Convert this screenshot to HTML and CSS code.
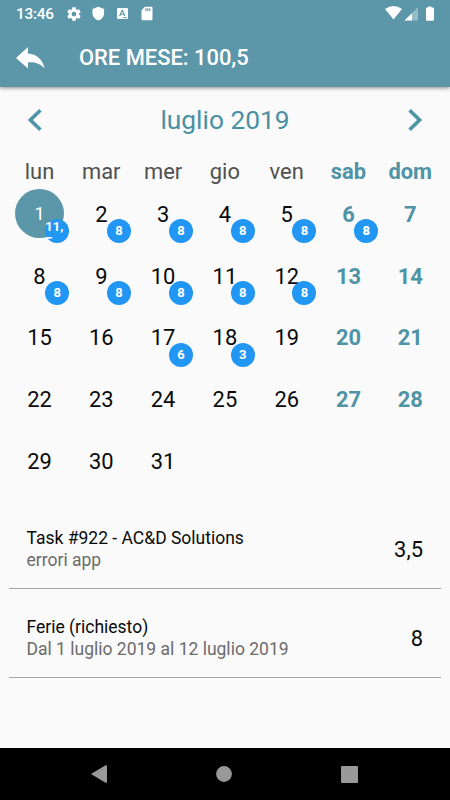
FILE: index.html
```html
<!DOCTYPE html>
<html lang="it">
<head>
<meta charset="utf-8">
<title>Ore mese</title>
<link rel="stylesheet" href="styles.css">
</head>
<body>
<header class="top">
  <div class="status">
    <span class="clock">13:46</span>
    <svg class="status-left" width="86" height="16" viewBox="0 0 86 16" fill="#fff">
      <g transform="translate(-.2 -.1) scale(.68)"><path d="M19.43 12.98c.04-.32.07-.64.07-.98s-.03-.66-.07-.98l2.11-1.65c.19-.15.24-.42.12-.64l-2-3.46c-.12-.22-.39-.3-.61-.22l-2.49 1c-.52-.4-1.08-.73-1.69-.98l-.38-2.65C14.46 2.18 14.25 2 14 2h-4c-.25 0-.46.18-.49.42l-.38 2.65c-.61.25-1.17.59-1.69.98l-2.49-1c-.23-.09-.49 0-.61.22l-2 3.46c-.13.22-.07.49.12.64l2.11 1.65c-.04.32-.07.65-.07.98s.03.66.07.98l-2.11 1.65c-.19.15-.24.42-.12.64l2 3.46c.12.22.39.3.61.22l2.49-1c.52.4 1.08.73 1.69.98l.38 2.65c.03.24.24.42.49.42h4c.25 0 .46-.18.49-.42l.38-2.65c.61-.25 1.17-.59 1.69-.98l2.49 1c.23.09.49 0 .61-.22l2-3.46c.12-.22.07-.49-.12-.64l-2.11-1.65zM12 15.5A3.5 3.5 0 1 1 12 8.500a3.500 3.500 0 0 1 0 7z"/></g>
      <path d="M32.300 .7L38.100 3.100V7.200C38.100 10.700 35.500 13.500 32.300 14.500C29.100 13.500 26.500 10.700 26.500 7.200V3.100Z"/>
      <path fill-rule="evenodd" d="M52 2h9q1 0 1 1v9q0 1-1 1h-9q-1 0-1-1v-9q0-1 1-1zM55.700 3.700L53.100 10.100h1.300l.5-1.400h2.700l.5 1.400h1.300L56.800 3.700zm.6 1.600l.9 2.400h-1.900zM57 11.200h4v.7h-4z"/>
      <path fill-rule="evenodd" d="M79 .8h6.500q1 0 1 1V13.300q0 1-1 1h-9q-1 0-1-1V4.300zM79.200 2.300v2.700h1.200V2.300zm2 0v2.700h1.200V2.300zm2 0v2.700h1.200V2.300z"/>
    </svg>
    <svg class="status-right" width="50" height="16" viewBox="0 0 50 16" fill="#fff">
      <path d="M0 3Q8.500-3 17 3L8.500 13.500Z"/>
      <path d="M33 1.200V14.400H19.500Z" opacity=".35"/>
      <path d="M27 7.200V14.400H19.500Z"/>
      <path d="M43 .4h3.500v1H48q1 0 1 1v11q0 1.300-1 1.300h-6q-1 0-1-1.300v-11q0-1 1-1h1Z"/>
    </svg>
  </div>
  <div class="appbar">
    <svg class="back" width="30" height="24" viewBox="0 0 30 24" fill="#fff"><path d="M0 11L12 0V6.500C20.500 7.100 26.500 12 28.700 21.500C24 16.200 19 14.800 12 15.200V21.500Z"/></svg>
    <h1>ORE MESE: 100,5</h1>
  </div>
</header>
<main>
  <div class="month">
    <svg width="14" height="22" viewBox="0 0 14 22"><path d="M12.400 1.300L2.400 11L12.400 20.700"/></svg>
    <h2>luglio 2019</h2>
    <svg width="14" height="22" viewBox="0 0 14 22"><path d="M1.600 1.300L11.600 11L1.600 20.700"/></svg>
  </div>
  <div class="names">
    <span>lun</span><span>mar</span><span>mer</span><span>gio</span><span>ven</span><span class="we">sab</span><span class="we">dom</span>
  </div>
  <div class="days">
    <div class="day"><span class="selected">1</span><b class="badge"><span class="wrap">11,<br>5</span></b></div><div class="day">2<b class="badge">8</b></div><div class="day">3<b class="badge">8</b></div><div class="day">4<b class="badge">8</b></div><div class="day">5<b class="badge">8</b></div><div class="day we">6<b class="badge">8</b></div><div class="day we">7</div>
    <div class="day">8<b class="badge">8</b></div><div class="day">9<b class="badge">8</b></div><div class="day">10<b class="badge">8</b></div><div class="day">11<b class="badge">8</b></div><div class="day">12<b class="badge">8</b></div><div class="day we">13</div><div class="day we">14</div>
    <div class="day">15</div><div class="day">16</div><div class="day">17<b class="badge">6</b></div><div class="day">18<b class="badge">3</b></div><div class="day">19</div><div class="day we">20</div><div class="day we">21</div>
    <div class="day">22</div><div class="day">23</div><div class="day">24</div><div class="day">25</div><div class="day">26</div><div class="day we">27</div><div class="day we">28</div>
    <div class="day">29</div><div class="day">30</div><div class="day">31</div>
  </div>
  <div class="list">
    <div class="item"><div class="info"><div class="title">Task #922 - AC&amp;D Solutions</div><div class="sub">errori app</div></div><div class="hours">3,5</div></div>
    <div class="item"><div class="info"><div class="title">Ferie (richiesto)</div><div class="sub">Dal 1 luglio 2019 al 12 luglio 2019</div></div><div class="hours">8</div></div>
  </div>
</main>
<nav class="nav">
  <svg width="16" height="18" viewBox="0 0 16 18" fill="#999"><path d="M0 9L14.600 .3Q16 -.2 16 1V17Q16 18.200 14.600 17.700Z"/></svg>
  <svg width="16" height="16" viewBox="0 0 16 16" fill="#999"><circle cx="8" cy="8" r="7.900"/></svg>
  <svg width="17" height="17" viewBox="0 0 17 17" fill="#999"><rect width="17" height="17" rx="1"/></svg>
</nav>
</body>
</html>
```
FILE: styles.css
```css
* { box-sizing: border-box; }
body {
  margin: 0;
  width: 450px;
  height: 800px;
  display: flex;
  flex-direction: column;
  overflow: hidden;
  background: #fafafa;
  color: #0a0a0a;
  font-family: Roboto, sans-serif;
}
.top {
  height: 87px;
  background: #5c97a9;
  color: #fff;
  box-shadow: 0 1px 4px rgba(0, 0, 0, .45);
}
.status {
  height: 27px;
  display: flex;
  align-items: center;
  padding: 0 15px 0 16px;
}
.clock {
  width: 50px;
  font-size: 15.3px;
  font-weight: 500;
  letter-spacing: -.2px;
}
.status svg { overflow: visible; }
.status-left { margin-top: 1px; }
.status-right { margin: 1px 0 0 auto; }
.appbar {
  height: 60px;
  display: flex;
  align-items: center;
  padding: 0 16px;
}
.back { margin-top: 4px; }
h1 {
  margin: 2px 0 0 33px;
  font-size: 21.9px;
  line-height: 26px;
  font-weight: 500;
}
main { flex: 1; }
.month {
  height: 66px;
  display: flex;
  align-items: center;
  justify-content: space-between;
  padding: 0 28px;
}
.month svg { fill: none; stroke: #4f93a6; stroke-width: 3.6; }
h2 {
  margin: 0;
  font-size: 26.3px;
  font-weight: 400;
  color: #4a90a4;
}
.names, .days {
  display: grid;
  grid-template-columns: repeat(7, 61.8px);
  margin-left: 8.6px;
}
.names {
  height: 30px;
  align-items: center;
  text-align: center;
  font-size: 21.9px;
  line-height: 26px;
  padding-top: 6px;
  color: #505050;
}
.days { grid-auto-rows: 61.8px; }
.day {
  position: relative;
  display: flex;
  align-items: center;
  justify-content: center;
  padding-top: 1px;
  font-size: 21.9px;
}
.names .we, .day.we { color: #4f93a6; font-weight: 700; }
.selected {
  width: 49px;
  height: 49px;
  margin-top: -2px;
  border-radius: 50%;
  background: #5c97a9;
  color: #fff;
  font-size: 18px;
  line-height: 49px;
  text-align: center;
}
.badge {
  position: absolute;
  right: 1.100px;
  bottom: 1.600px;
  width: 24px;
  height: 24px;
  border-radius: 50%;
  background: #2196f3;
  color: #fff;
  font-size: 13px;
  line-height: 24px;
  text-align: center;
}
.wrap {
  display: block;
  height: 20px;
  overflow: hidden;
  text-align: left;
  line-height: 15px;
}
.list { margin: 8px 9px 0; }
.item {
  height: 89px;
  display: flex;
  align-items: center;
  justify-content: space-between;
  padding: 11px 18px 0 17.500px;
  border-bottom: 1px solid #a5a5a5;
}
.title, .sub { font-size: 17.500px; line-height: 22px; white-space: nowrap; }
.sub { color: #6b6b6b; }
.hours { font-size: 21.900px; }
.nav {
  height: 52px;
  background: #000;
  display: flex;
  align-items: center;
  justify-content: space-between;
  padding: 0 92.500px 0 91px;
}
```
